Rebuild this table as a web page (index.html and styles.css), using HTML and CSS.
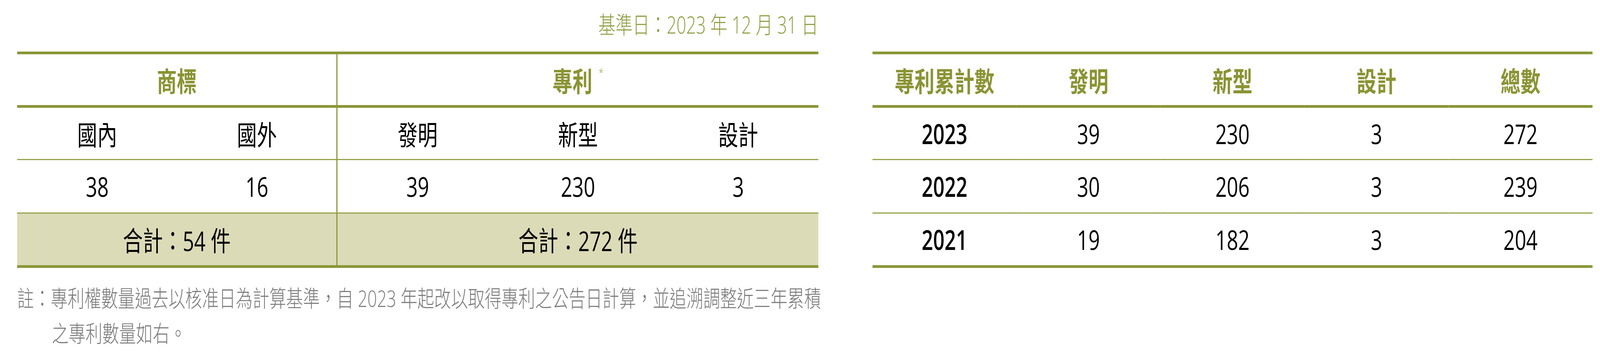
FILE: index.html
```html
<!DOCTYPE html>
<html lang="zh-Hant">
<head>
<meta charset="utf-8">
<title>專利與商標</title>
<link rel="stylesheet" href="styles.css">
</head>
<body>
<div class="frame">
<div class="page">
  <div class="date">基準日：2023 年 12 月 31 日</div>

  <div class="ltable">
    <div class="cell head span2 divider">商標</div>
    <div class="cell head span3">專利<sup class="star">*</sup></div>

    <div class="cell sub">國內</div>
    <div class="cell sub divider">國外</div>
    <div class="cell sub">發明</div>
    <div class="cell sub">新型</div>
    <div class="cell sub">設計</div>

    <div class="cell val">38</div>
    <div class="cell val divider">16</div>
    <div class="cell val">39</div>
    <div class="cell val">230</div>
    <div class="cell val">3</div>

    <div class="cell total span2 divider">合計：54 件</div>
    <div class="cell total span3">合計：272 件</div>
  </div>

  <div class="rtable">
    <div class="cell head">專利累計數</div>
    <div class="cell head">發明</div>
    <div class="cell head">新型</div>
    <div class="cell head">設計</div>
    <div class="cell head">總數</div>

    <div class="cell sub year">2023</div>
    <div class="cell sub">39</div>
    <div class="cell sub">230</div>
    <div class="cell sub">3</div>
    <div class="cell sub">272</div>

    <div class="cell val year">2022</div>
    <div class="cell val">30</div>
    <div class="cell val">206</div>
    <div class="cell val">3</div>
    <div class="cell val">239</div>

    <div class="cell last year">2021</div>
    <div class="cell last">19</div>
    <div class="cell last">182</div>
    <div class="cell last">3</div>
    <div class="cell last">204</div>
  </div>

  <p class="note">註：專利權數量過去以核准日為計算基準，自 2023 年起改以取得專利之公告日計算，並追溯調整近三年累積<br>之專利數量如右。</p>
</div>
</div>
</body>
</html>
```

FILE: styles.css
```css
* {
  box-sizing: border-box;
}

html, body {
  margin: 0;
  padding: 0;
  background: #ffffff;
  overflow: hidden;
}

body {
  font-family: "Open Sans", "Noto Sans CJK TC", sans-serif;
  color: #000000;
}

/* The browser window is 4096px wide while the reference frame is 5613px:
   the 5613px-wide design is fitted to the window width. */
.frame {
  width: 100%;
  overflow: hidden;
}

.page {
  width: 5600px;
  transform: scaleX(0.7297);
  transform-origin: 0 0;
  display: grid;
  grid-template-columns: 2811px 2526px;
  grid-template-rows: 132px auto auto;
  column-gap: 190px;
  padding-left: 60px;
}

.date {
  grid-column: 1;
  grid-row: 1;
  justify-self: end;
  padding-top: 32px;
  font-size: 60px;
  line-height: 62px;
  font-weight: 300;
  color: #8e9b3e;
  white-space: nowrap;
}

.ltable,
.rtable {
  grid-row: 2;
  display: grid;
  grid-template-columns: repeat(5, 1fr);
  border-top: 7px solid #8b9638;
  border-bottom: 7px solid #8b9638;
  align-self: start;
}

.ltable {
  grid-column: 1;
}

.rtable {
  grid-column: 2;
}

.cell {
  display: flex;
  align-items: center;
  justify-content: center;
  font-size: 70px;
  font-weight: 400;
  white-space: nowrap;
}

.span2 {
  grid-column: span 2;
}

.span3 {
  grid-column: span 3;
}

.divider {
  border-right: 4px solid #8b9638;
}

.head {
  height: 137px;
  border-bottom: 7px solid #8b9638;
  color: #8a9434;
  font-family: "Noto Sans CJK TC", sans-serif;
  font-weight: 700;
}

.sub {
  height: 134px;
  border-bottom: 3px solid #98a24a;
}

.val {
  height: 137px;
  border-bottom: 3px solid #98a24a;
}

.last {
  height: 132px;
}

.total {
  height: 132px;
  background: #dcdbb8;
}

.year {
  font-weight: 600;
}

.star {
  font-family: "Open Sans", sans-serif;
  font-size: 30px;
  font-weight: 300;
  color: #8e9b3e;
  align-self: flex-start;
  margin-top: 26px;
  margin-left: 22px;
}

.note {
  grid-column: 1;
  grid-row: 3;
  margin: 32px 0 0;
  padding-left: 122px;
  text-indent: -122px;
  font-size: 59px;
  line-height: 90px;
  font-weight: 300;
  color: #7a7a7a;
  white-space: nowrap;
}
```
